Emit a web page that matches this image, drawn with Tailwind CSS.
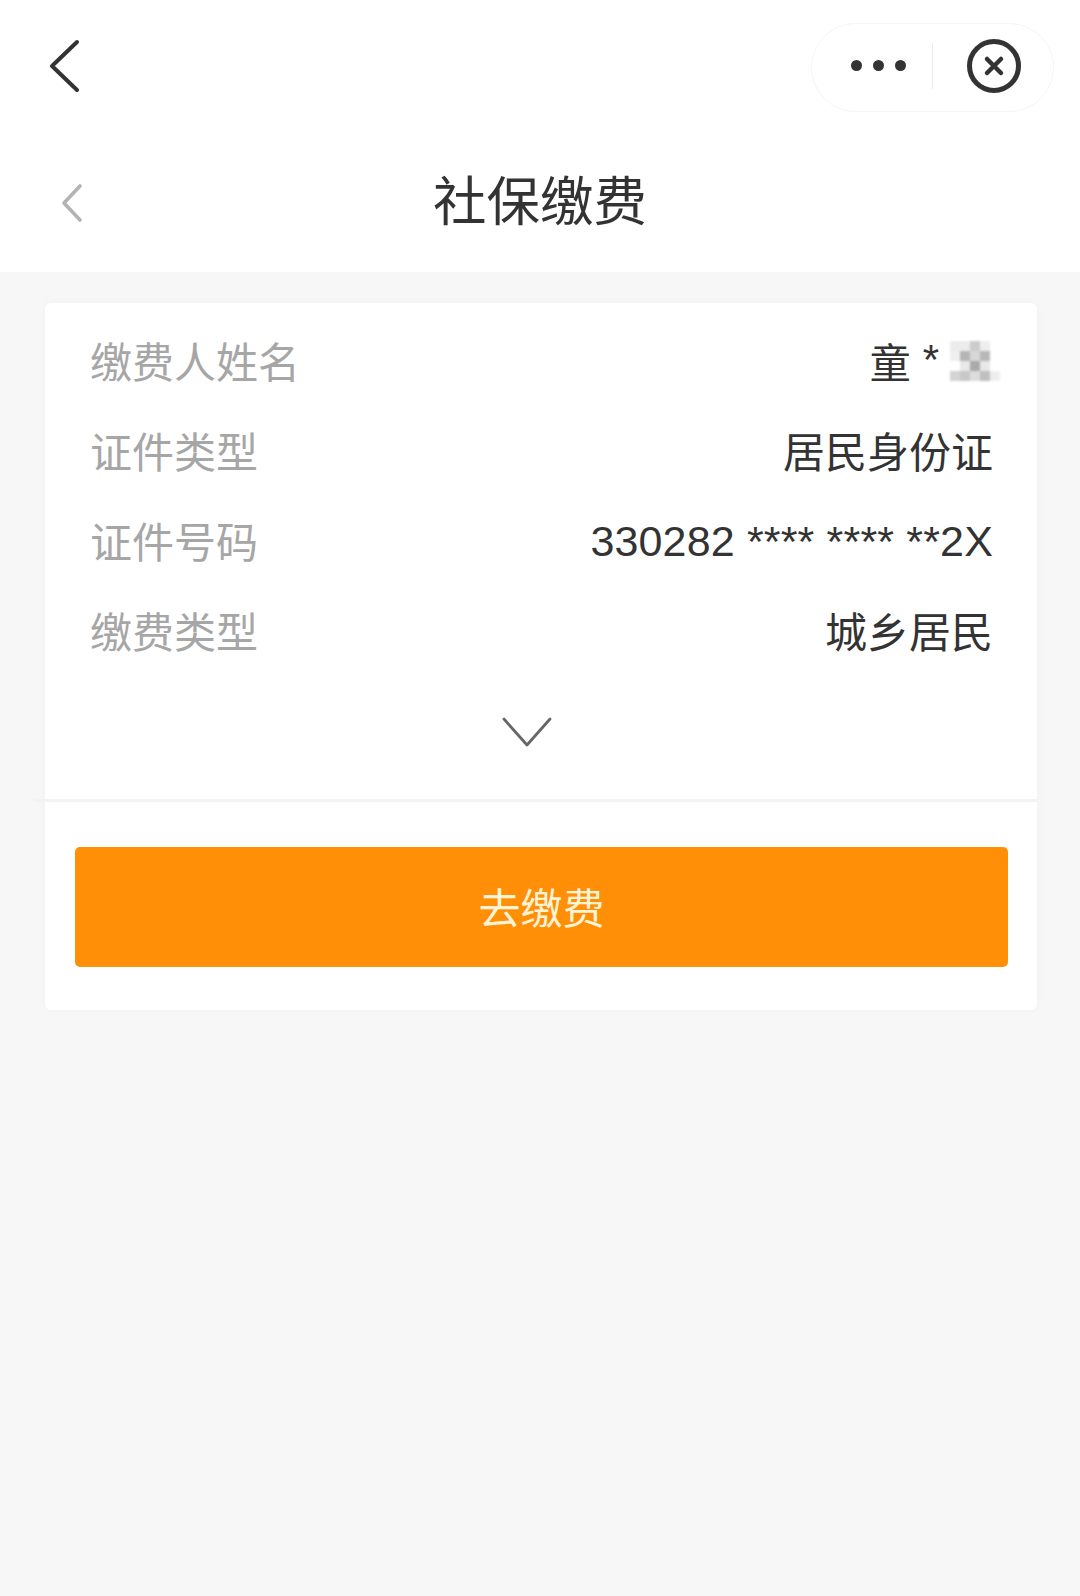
<!DOCTYPE html>
<html lang="zh-CN">
<head>
    <meta charset="UTF-8">
    <meta name="viewport" content="width=device-width, initial-scale=1.0">
    <title>社保缴费</title>
    <script src="https://cdn.jsdelivr.net/npm/@tailwindcss/browser@4"></script>
</head>
<body class="bg-[#f7f7f7] min-h-screen font-['Noto_Sans_CJK_SC','Liberation_Sans',sans-serif]">
    <div class="w-[1080px] h-[1596px] overflow-hidden">
        <header class="bg-white h-[272px] flex flex-col">
            <!-- wechat mini program bar -->
            <div class="h-[135px] flex items-start justify-between pl-[48px] pr-[26px] pt-[23px]">
                <svg class="mt-[16px]" width="32" height="54" viewBox="0 0 32 54" fill="none" stroke="#333333" stroke-width="4" stroke-linecap="round" stroke-linejoin="round"><path d="M29 3 L4 27 L29 51"/></svg>
                <div class="w-[243px] h-[89px] rounded-full border border-[#f5f5f5] bg-white flex items-center">
                    <div class="w-[120px] flex justify-end gap-[11px] pr-[26px] -mt-[4px]">
                        <span class="w-[11px] h-[11px] rounded-full bg-[#333333]"></span>
                        <span class="w-[11px] h-[11px] rounded-full bg-[#333333]"></span>
                        <span class="w-[11px] h-[11px] rounded-full bg-[#333333]"></span>
                    </div>
                    <div class="w-px h-[46px] bg-[#ececec] -mt-[4px]"></div>
                    <svg class="ml-[34px] -mt-[4px]" width="54" height="54" viewBox="0 0 54 54" fill="none" stroke="#333333"><circle cx="27" cy="27" r="24.5" stroke-width="5"/><path d="M20 20 L34 34 M34 20 L20 34" stroke-width="4.5" stroke-linecap="round"/></svg>
                </div>
            </div>
            <div class="relative h-[102px] flex items-center justify-center">
                <svg class="absolute left-[60px] top-[48px]" width="24" height="40" viewBox="0 0 24 40" fill="none" stroke="#b3b3b3" stroke-width="3.6" stroke-linecap="round" stroke-linejoin="round"><path d="M20 3 L4 20 L20 37"/></svg>
                <h1 class="text-[53.5px] leading-none font-normal text-[#333333] mt-[24px]">社保缴费</h1>
            </div>
        </header>

        <section class="ml-[45px] mt-[31px] w-[992px] h-[707px] bg-white rounded-[6px] shadow-[0_0_8px_rgba(0,0,0,0.03)] pt-[12px]">
            <div class="pl-[45px] pr-[44px] text-[42px] leading-none">
                <div class="h-[90px] flex items-center justify-between">
                    <span class="text-[#a6a6a6]">缴费人姓名</span>
                    <span class="flex items-center text-[#333333] -mr-[7px]"><span class="text-[41px]">童</span><span class="font-['Liberation_Sans'] ml-[12px] mr-[11px]">*</span>
                        <svg class="blur-[1px] mt-[2px]" width="50" height="40" viewBox="0 0 50 40" shape-rendering="crispEdges">
                            <rect x="0" y="0" width="20" height="10" fill="#ececec"/>
                            <rect x="20" y="0" width="10" height="10" fill="#cccccc"/>
                            <rect x="30" y="0" width="10" height="10" fill="#eeeeee"/>
                            <rect x="0" y="10" width="10" height="10" fill="#f0f0f0"/>
                            <rect x="10" y="10" width="10" height="10" fill="#b5b5b5"/>
                            <rect x="20" y="10" width="10" height="10" fill="#d8d8d8"/>
                            <rect x="30" y="10" width="10" height="10" fill="#b8b8b8"/>
                            <rect x="10" y="20" width="10" height="10" fill="#e8e8e8"/>
                            <rect x="20" y="20" width="10" height="10" fill="#aaaaaa"/>
                            <rect x="30" y="20" width="10" height="10" fill="#e8e8e8"/>
                            <rect x="0" y="30" width="10" height="10" fill="#d4d4d4"/>
                            <rect x="10" y="30" width="10" height="10" fill="#c8c8c8"/>
                            <rect x="20" y="30" width="10" height="10" fill="#dddddd"/>
                            <rect x="30" y="30" width="10" height="10" fill="#c0c0c0"/>
                            <rect x="40" y="30" width="10" height="10" fill="#eeeeee"/>
                        </svg>
                    </span>
                </div>
                <div class="h-[90px] flex items-center justify-between">
                    <span class="text-[#a6a6a6]">证件类型</span>
                    <span class="text-[#333333]">居民身份证</span>
                </div>
                <div class="h-[90px] flex items-center justify-between">
                    <span class="text-[#a6a6a6]">证件号码</span>
                    <span class="text-[#333333] text-[43px] tracking-[0.16px] mt-[2px] font-['Liberation_Sans']">330282 **** **** **2X</span>
                </div>
                <div class="h-[90px] flex items-center justify-between">
                    <span class="text-[#a6a6a6]">缴费类型</span>
                    <span class="text-[#333333]">城乡居民</span>
                </div>
            </div>
            <div class="h-[124px] pt-[42px] flex justify-center pr-[29px]">
                <svg width="50" height="30" viewBox="0 0 50 30" fill="none" stroke="#666666" stroke-width="2.8" stroke-linecap="round" stroke-linejoin="round"><path d="M2 2 L25 28 L48 2"/></svg>
            </div>
            <div class="h-[3px] -ml-[11px] bg-[#f3f3f3]"></div>
            <div class="mt-[45px] ml-[30px] w-[933px] h-[120px] rounded-[5px] bg-[#ff8f07] flex items-center justify-center text-[42px] leading-none text-[#fff3d6]"><span class="-mt-[2px]">去缴费</span></div>
        </section>
    </div>
</body>
</html>
